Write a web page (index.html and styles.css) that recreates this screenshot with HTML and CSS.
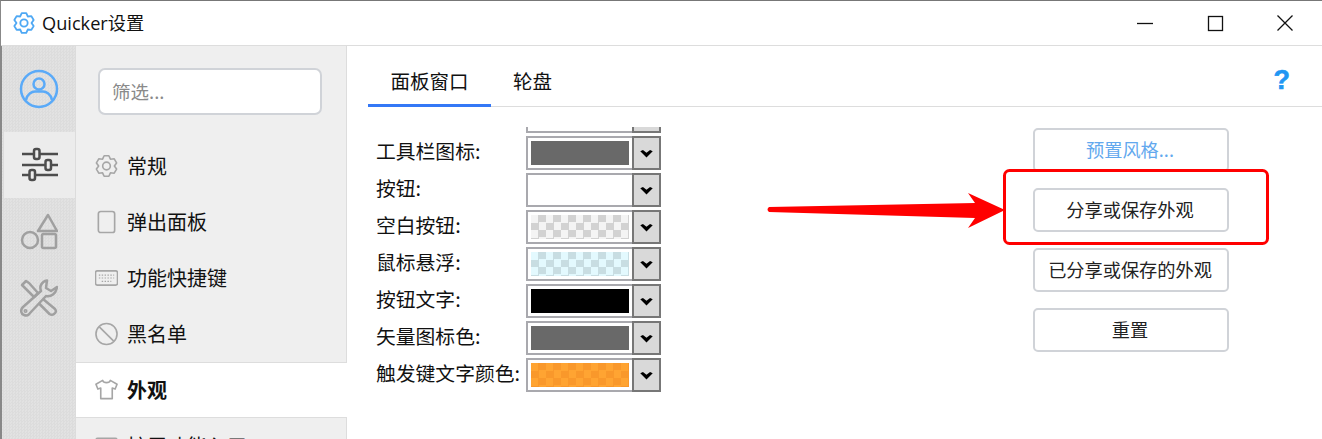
FILE: index.html
```html
<!DOCTYPE html>
<html lang="zh-CN">
<head>
<meta charset="utf-8">
<title>Quicker设置</title>
<link rel="stylesheet" href="styles.css">
</head>
<body>
<svg class="defs" width="0" height="0" aria-hidden="true">
  <symbol id="gear" viewBox="0 0 24 24">
    <polygon points="9.53,1.28 14.47,1.28 16.1,4.9 20.04,4.5 22.52,8.78 20.2,12 22.52,15.22 20.04,19.5 16.1,19.1 14.47,22.72 9.53,22.72 7.9,19.1 3.96,19.5 1.48,15.22 3.8,12 1.48,8.78 3.96,4.5 7.9,4.9"/>
    <circle cx="12" cy="12" r="4"/>
  </symbol>
  <symbol id="chev" viewBox="0 0 14 9">
    <path d="M0 1.5 L3 0 L7 3 L11 0 L14 1.5 L7 8.5 Z"/>
  </symbol>
</svg>
<div class="window">
  <header class="titlebar">
    <svg class="title-icon"><use href="#gear"/></svg>
    <span class="title-text">Quicker设置</span>
    <div class="controls">
      <span class="ctl"><svg width="18" height="18" viewBox="0 0 18 18"><path d="M1 9.5H17"/></svg></span>
      <span class="ctl"><svg width="18" height="18" viewBox="0 0 18 18"><rect x="2.5" y="2.5" width="14" height="14"/></svg></span>
      <span class="ctl"><svg width="18" height="18" viewBox="0 0 18 18"><path d="M1.5 1.5L16.5 16.5M16.5 1.5L1.5 16.5"/></svg></span>
    </div>
  </header>
  <div class="app">
    <nav class="rail">
      <div class="rail-item rail-profile">
        <svg width="40" height="40" viewBox="0 0 40 40" class="ico-blue">
          <circle cx="20" cy="20" r="18"/>
          <circle cx="20" cy="15" r="5.5"/>
          <path d="M7 31C8 25 13 22.500 16 22.500H24C27 22.500 32 25 33 31"/>
        </svg>
      </div>
      <div class="rail-item rail-active">
        <svg width="38" height="36" viewBox="0 0 38 36" class="ico-dark">
          <path d="M1 7H13M19 7H37M1 18H24M30 18H37M1 28H8M14 28H37"/>
          <rect x="13" y="2" width="5.500" height="10" rx="2"/>
          <rect x="24.500" y="13" width="5.500" height="10" rx="2"/>
          <rect x="8.500" y="23" width="5.500" height="10" rx="2"/>
        </svg>
      </div>
      <div class="rail-item rail-shapes">
        <svg width="38" height="38" viewBox="0 0 38 38" class="ico-gray">
          <path d="M28 2L37 18H18Z"/>
          <circle cx="10" cy="27" r="8"/>
          <rect x="22" y="21" width="14" height="14" rx="1.500"/>
        </svg>
      </div>
      <div class="rail-item rail-tools">
        <svg width="38" height="38" viewBox="0 0 38 38" class="ico-gray">
          <path d="M2 6L6 2L9 4L18 14L14 18L5 9Z"/>
          <path d="M27 1.500C22 2.500 19 7 21 12L3 28C0 31 1 35 4 36C7 37 9 36 10 34L26 17C31 18 36 15 37 8L31 12L26 9Z"/>
          <path d="M23 20L35 30C36.500 32 36 33.500 34 35C32 36.500 31 36 29.500 35L18.500 24"/>
          <circle cx="5.500" cy="32" r="0.800"/>
        </svg>
      </div>
    </nav>
    <aside class="side">
      <div class="filter-wrap"><div class="filter">筛选...</div></div>
      <ul class="menu">
        <li class="menu-item"><svg class="mi"><use href="#gear"/></svg><span class="mt">常规</span></li>
        <li class="menu-item">
          <svg class="mi" viewBox="0 0 24 24"><rect x="3.500" y="1" width="17" height="22" rx="2.500"/></svg><span class="mt">弹出面板</span>
        </li>
        <li class="menu-item">
          <svg class="mi" viewBox="0 0 24 24"><rect x="0.500" y="4.500" width="23" height="15" rx="2"/><path class="dots" d="M4 9H20M4 12H20M7 15.500H17"/></svg><span class="mt">功能快捷键</span>
        </li>
        <li class="menu-item">
          <svg class="mi" viewBox="0 0 24 24"><circle cx="12" cy="12" r="11"/><path d="M4.500 4.500L19.500 19.500"/></svg><span class="mt">黑名单</span>
        </li>
        <li class="menu-item menu-current">
          <svg class="mi" viewBox="0 0 24 24"><path d="M8 2L1 6L3 11L6 10V21H18V10L21 11L23 6L16 2C15 5 9 5 8 2Z"/></svg><span class="mt">外观</span>
        </li>
        <li class="menu-item">
          <svg class="mi" viewBox="0 0 24 24"><rect x="1" y="4" width="22" height="17" rx="2"/></svg><span class="mt">扩展功能入口</span>
        </li>
      </ul>
    </aside>
    <main class="main">
      <div class="tabs">
        <span class="tab tab-on">面板窗口</span>
        <span class="tab">轮盘</span>
        <span class="help">?</span>
      </div>
      <div class="body">
        <div class="form">
          <div class="rows">
            <div class="row"><span class="lab"></span><span class="combo"><span class="field"><span class="swatch"></span></span><span class="drop"><svg class="chev"><use href="#chev"/></svg></span></span></div>
            <div class="row"><span class="lab">工具栏图标:</span><span class="combo"><span class="field"><span class="swatch s-gray"></span></span><span class="drop"><svg class="chev"><use href="#chev"/></svg></span></span></div>
            <div class="row"><span class="lab">按钮:</span><span class="combo"><span class="field"><span class="swatch"></span></span><span class="drop"><svg class="chev"><use href="#chev"/></svg></span></span></div>
            <div class="row"><span class="lab">空白按钮:</span><span class="combo"><span class="field"><span class="swatch s-check"></span></span><span class="drop"><svg class="chev"><use href="#chev"/></svg></span></span></div>
            <div class="row"><span class="lab">鼠标悬浮:</span><span class="combo"><span class="field"><span class="swatch s-blue"></span></span><span class="drop"><svg class="chev"><use href="#chev"/></svg></span></span></div>
            <div class="row"><span class="lab">按钮文字:</span><span class="combo"><span class="field"><span class="swatch s-black"></span></span><span class="drop"><svg class="chev"><use href="#chev"/></svg></span></span></div>
            <div class="row"><span class="lab">矢量图标色:</span><span class="combo"><span class="field"><span class="swatch s-gray"></span></span><span class="drop"><svg class="chev"><use href="#chev"/></svg></span></span></div>
            <div class="row"><span class="lab">触发键文字颜色:</span><span class="combo"><span class="field"><span class="swatch s-orange"></span></span><span class="drop"><svg class="chev"><use href="#chev"/></svg></span></span></div>
          </div>
        </div>
        <div class="actions">
          <button class="btn btn-link">预置风格...</button>
          <button class="btn">分享或保存外观</button>
          <button class="btn">已分享或保存的外观</button>
          <button class="btn">重置</button>
        </div>
      </div>
    </main>
  </div>
  <svg class="annot" width="1322" height="439" viewBox="0 0 1322 439">
    <rect class="annot-box" x="1004.500" y="170.500" width="263" height="73" rx="5"/>
    <path class="annot-arrow" d="M769 207 L975 203 L968 193 L1005 210 L968 228 L975 218 L769 212 Q766 209.500 769 207 Z"/>
  </svg>
</div>
</body>
</html>
```

FILE: styles.css
```css
* { box-sizing: border-box; }
html, body { margin: 0; padding: 0; height: 100%; overflow: hidden; background: #fff; }
body { font-family: "Noto Sans CJK SC", "Noto Sans", sans-serif; color: #111; }
.defs { position: absolute; }

.window {
  position: relative;
  width: 1322px;
  height: 439px;
  display: flex;
  flex-direction: column;
  border-top: 1px solid #777;
  border-left: 1px solid #888;
  overflow: hidden;
}

.titlebar {
  flex: none;
  height: 45px;
  display: flex;
  align-items: center;
  padding-left: 12px;
  border-bottom: 1px solid #ddd;
  background: #fff;
}
.title-icon { width: 22px; height: 24px; fill: none; stroke: #4ea8f4; stroke-width: 2; stroke-linejoin: round; }
.title-text { margin-left: 7px; font-family: "Open Sans", "Noto Sans CJK SC", sans-serif; font-size: 18.200px; line-height: 24px; }
.controls { margin-left: auto; display: flex; padding-right: 2px; }
.ctl { width: 70px; height: 44px; display: flex; align-items: center; justify-content: center; }
.ctl svg { fill: none; stroke: #111; stroke-width: 1.300; }

.app { flex: 1; display: flex; min-height: 0; }

.rail {
  flex: none;
  width: 75px;
  border-left: 1px solid #888;
  background-color: #e0e0e0;
  background-image: conic-gradient(#dcdcdc 25%, #e2e2e2 0 50%, #dcdcdc 0 75%, #e2e2e2 0);
  background-size: 3px 3px;
  display: flex;
  flex-direction: column;
}
.rail-item { display: flex; align-items: center; justify-content: center; flex: none; }
.rail-profile { height: 86px; }
.rail-active { height: 66px; background: #ececec; margin: 0 1px 0 2px; }
.rail-shapes { height: 70px; padding-bottom: 2px; }
.rail-tools { height: 62px; padding-bottom: 2px; }
.ico-blue { fill: none; stroke: #5aaaf8; stroke-width: 2.500; }
.ico-dark { fill: #ececec; stroke: #4d4d4d; stroke-width: 2.500; }
.ico-gray { fill: none; stroke: #a0a0a0; stroke-width: 2.500; stroke-linejoin: round; }

.side {
  flex: none;
  width: 271px;
  background: #efefef;
  border-right: 1px solid #ddd;
}
.filter-wrap { padding: 22px 24px 0 22px; height: 92px; }
.filter {
  height: 47px;
  background: #fff;
  border: 2px solid #d0d3d8;
  border-radius: 7px;
  padding: 0 0 2px 12px;
  display: flex;
  align-items: center;
  font-size: 18.500px;
  color: #8a8a8a;
}
.menu { list-style: none; margin: 0; padding: 0; }
.menu-item {
  height: 56px;
  display: flex;
  align-items: center;
  padding-left: 19px;
  font-size: 20px;
  gap: 9px;
}
.mt { padding-bottom: 2px; }
.mi { width: 23px; height: 24px; fill: none; stroke: #a6a6a6; stroke-width: 1.700; stroke-linejoin: round; flex: none; }
.dots { stroke-dasharray: 1.500 1.500; stroke-width: 1.300; }
.menu-current {
  background: #fff;
  font-weight: 700;
  border-top: 1px solid #ddd;
  border-bottom: 1px solid #ddd;
  margin-right: -1px;
}

.main { flex: 1; min-width: 0; display: flex; flex-direction: column; }
.tabs {
  flex: none;
  height: 61px;
  margin-left: 21px;
  display: flex;
  align-items: flex-end;
  border-bottom: 1px solid #ddd;
  font-size: 19.500px;
}
.tab { height: 60px; display: flex; align-items: center; padding: 10px 22px 0; margin-bottom: -1px; border-bottom: 3px solid transparent; }
.tab-on { border-bottom-color: #3478f6; width: 123px; justify-content: center; padding: 10px 0 0; }
.help {
  margin-left: auto;
  margin-right: 32px;
  align-self: center;
  font-family: "Liberation Sans", sans-serif;
  font-weight: 700;
  font-size: 27px;
  line-height: 30px;
  color: #2196f3;
  padding-top: 8px;
  -webkit-text-stroke: 0.6px #2196f3;
}

.body {
  flex: 1;
  min-height: 0;
  display: flex;
  justify-content: space-between;
  padding: 20px 93px 0 29px;
}
.form { overflow: hidden; height: 312px; }
.rows { margin-top: -28px; display: flex; flex-direction: column; gap: 3px; }
.row { display: flex; align-items: center; height: 34px; }
.lab { width: 150px; font-size: 19.800px; line-height: 28px; padding-bottom: 4px; white-space: nowrap; }
.combo { display: flex; height: 34px; }
.field {
  width: 106px;
  height: 34px;
  border: 2px solid #a9a9ae;
  border-right: 0;
  padding: 3px;
  background: #fff;
}
.swatch { display: block; width: 98px; height: 24px; }
.s-gray { background: #696969; }
.s-black { background: #000; }
.s-check { background: conic-gradient(#d2d2d2 25%, #f4f4f4 0 50%, #d2d2d2 0 75%, #f4f4f4 0) 0 0 / 15px 15px; }
.s-blue { background: conic-gradient(#c8dde2 25%, #e3f9fe 0 50%, #c8dde2 0 75%, #e3f9fe 0) 0 0 / 15px 15px; }
.s-orange { background: conic-gradient(#f9982b 25%, #ffa432 0 50%, #f9982b 0 75%, #ffa432 0) 0 0 / 15px 15px; }
.drop {
  width: 29px;
  height: 34px;
  border: 2px solid #777;
  background: #d9d9d9;
  display: flex;
  align-items: center;
  justify-content: center;
  padding-top: 2px;
}
.chev { width: 13px; height: 8px; fill: #000; }

.actions { width: 196px; display: flex; flex-direction: column; gap: 16px; padding-top: 1px; }
.btn {
  width: 196px;
  height: 44px;
  background: #fff;
  border: 2px solid #d0d3d8;
  border-radius: 5px;
  font-family: inherit;
  font-size: 18.200px;
  color: #222;
  padding: 0 2px 2px 0;
}
.btn-link { color: #62a8ee; }

.annot { position: absolute; left: -1px; top: -1px; pointer-events: none; }
.annot-box { fill: none; stroke: #f00; stroke-width: 3; }
.annot-arrow { fill: #f00; }
```
